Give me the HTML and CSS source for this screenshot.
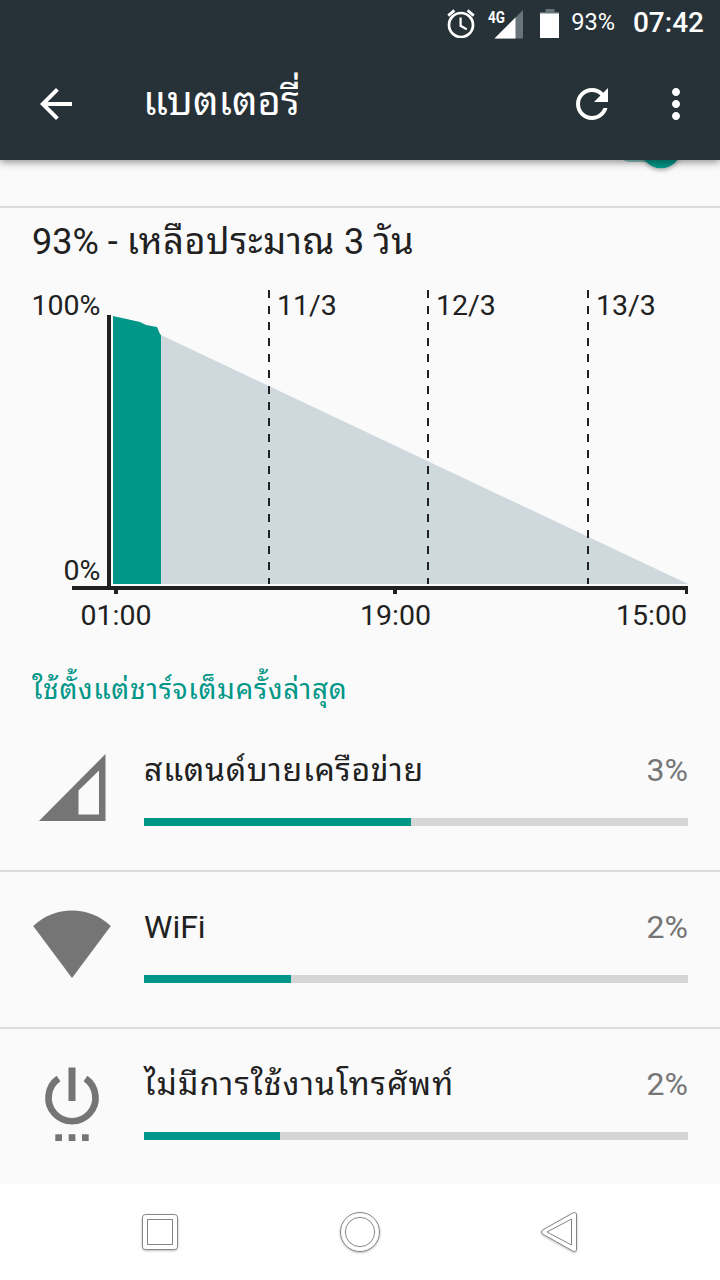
FILE: index.html
```html
<!DOCTYPE html>
<html lang="th">
  <head>
    <meta charset="UTF-8" />
    <meta name="viewport" content="width=device-width, initial-scale=1.0" />
    <title>แบตเตอรี่</title>
    <link rel="stylesheet" href="styles.css">
  </head>
  <body>
    <div class="screen">
      <header class="header">
        <div class="status-bar">
          <svg class="alarm-icon" width="28" height="30" viewBox="0 0 28 30">
            <circle cx="14" cy="17" r="12" fill="none" stroke="#fff" stroke-width="2.7" />
            <path d="M13.6 9.5v8.3l6.2 3.6" fill="none" stroke="#fff" stroke-width="2.2" />
            <path d="M1.2 7.6l6.2-5.2M26.8 7.6l-6.2-5.2" stroke="#fff" stroke-width="2.7" />
          </svg>
          <svg class="signal-icon" width="36" height="30" viewBox="0 0 36 30">
            <path d="M35 2v28.500H6.500z" fill="#69737a" />
            <path d="M27.500 9.500V30.500H6.500z" fill="#fff" />
            <text x="0" y="14.500" class="network" textLength="17" lengthAdjust="spacingAndGlyphs">4G</text>
          </svg>
          <svg class="battery-icon" width="20" height="30" viewBox="0 0 20 30">
            <path d="M5.500 1h9v3H19v2H0V4h5.500z" fill="#69737a" />
            <path d="M0 5.500h19v24.500H0z" fill="#fff" />
          </svg>
          <span class="battery-level">93%</span>
          <span class="clock">07:42</span>
        </div>
        <div class="toolbar">
          <svg class="back-icon" width="48" height="48" viewBox="0 0 24 24">
            <path d="M20 11H7.830l5.590-5.590L12 4l-8 8 8 8 1.410-1.410L7.830 13H20v-2z" fill="#fff" />
          </svg>
          <h1 class="title">แบตเตอรี่</h1>
          <svg class="refresh-icon" width="48" height="48" viewBox="0 0 24 24">
            <path d="M17.650 6.350C16.200 4.900 14.210 4 12 4c-4.420 0-7.990 3.580-7.990 8s3.570 8 7.990 8c3.730 0 6.840-2.550 7.730-6h-2.080c-.820 2.330-3.040 4-5.650 4-3.310 0-6-2.690-6-6s2.690-6 6-6c1.660 0 3.140.69 4.220 1.780L13 11h7V4l-2.350 2.350z" fill="#fff" />
          </svg>
          <svg class="more-icon" width="48" height="48" viewBox="0 0 24 24">
            <path d="M12 8c1.100 0 2-.9 2-2s-.9-2-2-2-2 .9-2 2 .9 2 2 2zm0 2c-1.100 0-2 .9-2 2s.9 2 2 2 2-.9 2-2-.9-2-2-2zm0 6c-1.100 0-2 .9-2 2s.9 2 2 2 2-.9 2-2-.9-2-2-2z" fill="#fff" />
          </svg>
        </div>
      </header>

      <main class="content">
        <div class="switch-row">
          <svg class="switch" width="70" height="16" viewBox="0 0 70 16">
            <rect x="0" y="-26" width="66" height="28" rx="14" fill="#8bc9c2" />
            <circle class="thumb" cx="45" cy="-12" r="20.300" fill="#009688" />
          </svg>
        </div>

        <h2 class="summary">93% - <span class="summary-text">เหลือประมาณ</span> 3 <span class="summary-text">วัน</span></h2>

        <svg class="chart" width="720" height="360" viewBox="0 280 720 360">
          <path d="M161 335L688 584H161z" fill="#cfd8dd" />
          <path d="M113 316l27 6 6 3 11 2 3 7 1 1v249h-48z" fill="#009688" />
          <path d="M269 290v294M428 290v294M588 290v294" stroke="#212121" stroke-width="2" stroke-dasharray="8 8" />
          <path d="M107 315h4v271h577v8h-3v-4H397v4h-4v-4H118v4h-4v-4H72v-4h35z" fill="#212121" />
          <g class="chart-label">
            <text x="100.500" y="315" text-anchor="end">100%</text>
            <text x="100.500" y="580" text-anchor="end">0%</text>
            <text x="277" y="315">11/3</text>
            <text x="436" y="315">12/3</text>
            <text x="596" y="315">13/3</text>
            <text x="116" y="625" text-anchor="middle">01:00</text>
            <text x="395.500" y="625" text-anchor="middle">19:00</text>
            <text x="687" y="625" text-anchor="end">15:00</text>
          </g>
        </svg>

        <h3 class="category">ใช้ตั้งแต่ชาร์จเต็มครั้งล่าสุด</h3>

        <ul class="usage-list">
          <li class="usage">
            <svg class="usage-icon" width="80" height="80" viewBox="0 0 80 80">
              <path d="M73.500 7v67H7zM67 23.500L46.500 43.500V67.500H67z" fill="#757575" fill-rule="evenodd" />
            </svg>
            <div class="usage-body">
              <div class="usage-text">
                <span class="usage-name standby">สแตนด์บายเครือข่าย</span>
                <span class="usage-percent">3%</span>
              </div>
              <div class="bar"><div class="bar-fill" style="width: 267px"></div></div>
            </div>
          </li>
          <li class="usage">
            <svg class="usage-icon" width="80" height="80" viewBox="0 0 80 80">
              <path d="M40 74L1.200 22Q18 6.500 40 6.500T78.800 22z" fill="#757575" />
            </svg>
            <div class="usage-body">
              <div class="usage-text">
                <span class="usage-name">WiFi</span>
                <span class="usage-percent">2%</span>
              </div>
              <div class="bar"><div class="bar-fill" style="width: 147px"></div></div>
            </div>
          </li>
          <li class="usage">
            <svg class="usage-icon" width="80" height="80" viewBox="0 0 80 80">
              <path d="M36.500 6.500h7V40h-7zM23.300 73.300h6.700V80h-6.700zM36.700 73.300h6.700V80h-6.700zM50 73.300h6.700V80H50z" fill="#757575" />
              <path d="M26.500 17.500A23.500 23.500 0 1 0 53.500 17.500" fill="none" stroke="#757575" stroke-width="6.700" />
            </svg>
            <div class="usage-body">
              <div class="usage-text">
                <span class="usage-name idle">ไม่มีการใช้งานโทรศัพท์</span>
                <span class="usage-percent">2%</span>
              </div>
              <div class="bar"><div class="bar-fill" style="width: 136px"></div></div>
            </div>
          </li>
        </ul>
      </main>

      <nav class="nav-bar">
        <svg class="nav-icon" width="48" height="48" viewBox="0 0 48 48">
          <rect x="6.500" y="6.500" width="35" height="35" rx="3" />
          <rect x="11.500" y="11.500" width="25" height="25" />
        </svg>
        <svg class="nav-icon" width="48" height="48" viewBox="0 0 48 48">
          <circle cx="24" cy="24" r="19.500" />
          <circle cx="24" cy="24" r="14.700" />
        </svg>
        <svg class="nav-icon" width="48" height="48" viewBox="0 0 48 48">
          <path d="M6.500 22L37 4.900Q40.500 3.600 40.500 7V41Q40.500 44.400 37 43.100L6.500 26Q4 24 6.500 22z" />
          <path d="M11 24L35.500 11V37z" />
        </svg>
      </nav>
    </div>
  </body>
</html>
```
FILE: styles.css
```css
* {
  box-sizing: border-box;
}
body {
  margin: 0;
  font-family: Roboto, "Droid Sans Thai", "Noto Sans Thai Looped", Loma, Waree, Garuda, "Noto Sans", sans-serif;
  color: #212121;
}
h1,
h2,
h3,
ul {
  margin: 0;
  padding: 0;
  font-weight: 400;
}
.screen {
  display: flex;
  flex-direction: column;
  width: 720px;
  height: 1280px;
  overflow: hidden;
  background: #fafafa;
}

/* Header */
.header {
  position: relative;
  height: 160px;
  background: #263238;
  color: #fff;
  box-shadow: 0 2px 8px rgba(0, 0, 0, 0.45);
}
.status-bar {
  display: flex;
  justify-content: flex-end;
  height: 48px;
  padding: 8px 16px 0 0;
}
.alarm-icon {
  margin-right: 13px;
}
.signal-icon {
  margin-right: 16px;
  overflow: visible;
}
.network {
  font-size: 16px;
  font-weight: 700;
  fill: #fff;
}
.battery-icon {
  margin-right: 11px;
}
.battery-level {
  margin-right: 18px;
  font-size: 23.6px;
  line-height: 28px;
}
.clock {
  font-size: 28px;
  font-weight: 500;
  line-height: 29px;
}
.toolbar {
  display: flex;
  align-items: center;
  height: 112px;
  padding: 0 20px 0 32px;
}
.title {
  flex: 1;
  margin-left: 63px;
  padding-bottom: 4px;
  font-size: 40px;
  line-height: 60px;
  white-space: nowrap;
}
.refresh-icon {
  margin-right: 36px;
}

/* Content */
.content {
  flex: 1;
}
.switch-row {
  display: flex;
  justify-content: flex-end;
  height: 48px;
  padding-right: 34px;
  border-bottom: 2px solid #dcdcdc;
}
.thumb {
  filter: drop-shadow(0 2px 2px rgba(0, 0, 0, 0.3));
}
.summary {
  height: 72px;
  padding-left: 32px;
  font-size: 36px;
  line-height: 68px;
  white-space: nowrap;
}
.summary-text {
  letter-spacing: 0.7px;
}
.chart {
  display: block;
}
.chart-label {
  font-size: 28.5px;
  fill: #212121;
}
.category {
  height: 75px;
  padding-left: 32px;
  font-size: 28px;
  line-height: 100px;
  letter-spacing: 0.7px;
  white-space: nowrap;
  color: #009688;
}

/* Usage list */
.usage-list {
  list-style: none;
}
.usage {
  display: flex;
  height: 157px;
  padding: 32px 32px 0;
  border-bottom: 2px solid #dcdcdc;
}
.usage:last-child {
  height: 155px;
  border-bottom: 0;
}
.usage-icon {
  margin-right: 32px;
  overflow: visible;
}
.usage-body {
  flex: 1;
}
.usage-text {
  display: flex;
  justify-content: space-between;
  height: 71px;
  font-size: 32px;
  line-height: 46px;
  white-space: nowrap;
}
.standby {
  letter-spacing: 0.75px;
}
.idle {
  letter-spacing: 1.15px;
}
.usage-percent {
  color: #757575;
}
.bar {
  height: 8px;
  background: #d6d6d6;
}
.bar-fill {
  height: 8px;
  background: #009688;
}

/* Navigation bar */
.nav-bar {
  display: flex;
  justify-content: center;
  gap: 152px;
  height: 96px;
  padding-top: 24px;
  background: #fff;
}
.nav-icon {
  fill: #fff;
  stroke: #858585;
  stroke-width: 1;
  filter: drop-shadow(0 1px 1px rgba(0, 0, 0, 0.25));
}
```
